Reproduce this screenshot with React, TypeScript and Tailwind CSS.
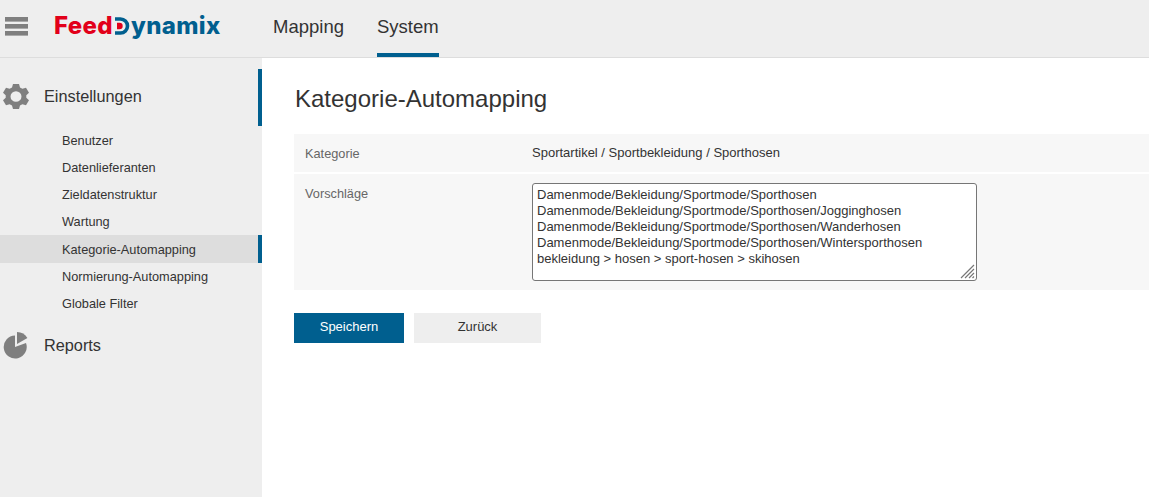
const subItems = [
  "Benutzer",
  "Datenlieferanten",
  "Zieldatenstruktur",
  "Wartung",
  "Kategorie-Automapping",
  "Normierung-Automapping",
  "Globale Filter",
];

const suggestions = `Damenmode/Bekleidung/Sportmode/Sporthosen
Damenmode/Bekleidung/Sportmode/Sporthosen/Jogginghosen
Damenmode/Bekleidung/Sportmode/Sporthosen/Wanderhosen
Damenmode/Bekleidung/Sportmode/Sporthosen/Wintersporthosen
bekleidung > hosen > sport-hosen > skihosen`;

function Logo() {
  return (
    <div className="flex items-center font-['Inter',sans-serif] text-[24px] font-extrabold leading-none tracking-[0.35px]">
      <span className="text-[#e2001a]">Feed</span>
      {/* D of the logo: blue bow with a red half dot */}
      <svg width="16" height="18" viewBox="0 0 16 18" className="mx-[1px]">
        <path d="M1 2h5.500a7 7 0 0 1 0 14H1" fill="none" stroke="#005f8f" strokeWidth="3.6" />
        <path d="M3 5.800h2.500a3.200 3.200 0 0 1 0 6.400H3z" fill="#e2001a" />
      </svg>
      <span className="text-[#005f8f]">ynamix</span>
    </div>
  );
}

function MenuIcon() {
  return (
    <svg width="23" height="19" viewBox="0 0 23 19" fill="#7f7f7f">
      <rect y="0" width="23" height="4.600" />
      <rect y="7" width="23" height="4.600" />
      <rect y="14" width="23" height="4.600" />
    </svg>
  );
}

function GearIcon() {
  return (
    <svg width="26" height="27" viewBox="0 0 26 28" preserveAspectRatio="none">
      <path
        fillRule="evenodd"
        fill="#7f7f7f"
        d="M10 1h6l1 3.600 2.400 1.400 3.600-1 3 5.200-2.700 2.600v2.400L26 17.800l-3 5.200-3.600-1-2.400 1.400L16 27h-6l-1-3.600L6.600 22l-3.600 1-3-5.200 2.700-2.600v-2.400L0 10.200 3 5l3.600 1L9 4.600zM13 8.500a5.500 5.500 0 1 0 0 11 5.500 5.500 0 0 0 0-11z"
      />
    </svg>
  );
}

function PieIcon() {
  return (
    <svg width="25" height="28" viewBox="0 0 25 28">
      <path d="M12 3.500V15L23 11A11.500 11.500 0 1 1 12 3.500z" fill="#7f7f7f" />
      <path d="M14 0V12L24.400 6A12 12 0 0 0 14 0z" fill="#7f7f7f" />
    </svg>
  );
}

function ResizeGrip() {
  return (
    <svg width="15" height="15" viewBox="0 0 15 15" className="absolute bottom-[2px] right-[2px]" stroke="#777777" strokeWidth="1.200">
      <path d="M1 14L14 1M5 14L14 5M9 14L14 9M12.500 14L14 12.500" />
    </svg>
  );
}

export default function App() {
  return (
    <div className="flex h-[497px] w-[1149px] flex-col overflow-hidden bg-white font-['Liberation_Sans',sans-serif] text-[#333333]">
      <header className="flex h-[58px] shrink-0 border-b border-[#dddddd] bg-[#eeeeee]">
        <div className="flex w-[273px] shrink-0 items-center pb-[5px]">
          <div className="ml-[5px]">
            <MenuIcon />
          </div>
          <div className="ml-[26px]">
            <Logo />
          </div>
        </div>
        <nav className="flex gap-[33px] text-[18.5px]">
          <a className="flex items-center pb-[3px]">Mapping</a>
          <a className="flex items-center border-b-[4px] border-[#005f8f] pt-[1px]">System</a>
        </nav>
      </header>

      <div className="flex min-h-0 flex-1">
        <aside className="w-[262px] shrink-0 bg-[#eeeeee] pt-[11px]">
          <div className="flex h-[57px] items-center border-r-[4px] border-[#005f8f] pb-[2px] pl-[3px]">
            <GearIcon />
            <span className="ml-[15px] text-[16.3px]">Einstellungen</span>
          </div>
          <ul className="mt-[1px] text-[12.75px]">
            {subItems.map((item) => (
              <li
                key={item}
                className={
                  item === "Kategorie-Automapping"
                    ? "flex h-[28px] items-center border-r-[4px] border-[#005f8f] bg-[#dddddd] pl-[62px] pt-[1px]"
                    : "flex h-[27px] items-center pl-[62px]"
                }
              >
                {item}
              </li>
            ))}
          </ul>
          <div className="mt-[14px] flex h-[30px] items-center pl-[3px]">
            <PieIcon />
            <span className="mb-[2px] ml-[16px] text-[16.3px]">Reports</span>
          </div>
        </aside>

        <main className="min-w-0 flex-1 pl-[32px] pt-[27px]">
          <h1 className="ml-[1px] text-[24px] leading-[28px]">Kategorie-Automapping</h1>

          <div className="mt-[21px] flex flex-col gap-[2px] text-[13px]">
            <div className="flex h-[38px] items-center bg-[#f7f7f7] pl-[11px]">
              <span className="w-[227px] shrink-0 pt-[2px] text-[12.75px] text-[#666666]">Kategorie</span>
              <span>Sportartikel / Sportbekleidung / Sporthosen</span>
            </div>
            <div className="flex h-[116px] items-start bg-[#f7f7f7] pl-[11px] pt-[9px]">
              <span className="mt-[1px] w-[227px] shrink-0 text-[12.75px] text-[#666666]">Vorschläge</span>
              <div className="relative h-[98px] w-[445px]">
                <textarea
                  readOnly
                  value={suggestions}
                  className="block h-full w-full resize-none rounded-[3px] border border-[#767676] bg-white px-[4px] py-[3px] text-[13px] leading-[16px] text-[#333333] outline-none"
                />
                <ResizeGrip />
              </div>
            </div>
          </div>

          <div className="mt-[23px] flex gap-[10px] text-[13px]">
            <button className="h-[30px] w-[110px] bg-[#005f8f] pb-[2px] text-white">Speichern</button>
            <button className="h-[30px] w-[127px] bg-[#eeeeee] pb-[2px]">Zurück</button>
          </div>
        </main>
      </div>
    </div>
  );
}
